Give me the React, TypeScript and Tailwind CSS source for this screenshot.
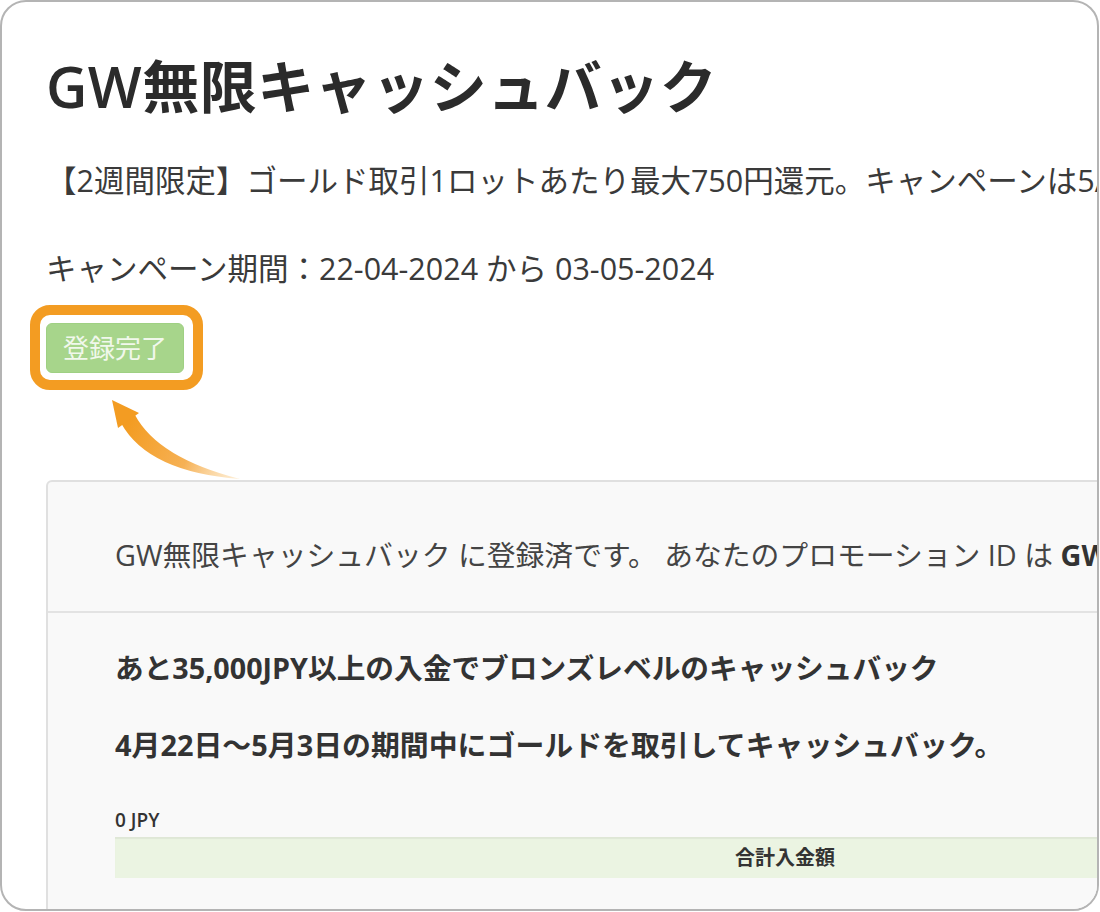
import React from "react";

const FONT = "font-['Open_Sans','Noto_Sans_CJK_JP',sans-serif]";

function Arrow() {
  return (
    <svg
      className="pointer-events-none absolute left-0 top-0"
      width="300"
      height="500"
      viewBox="0 0 300 500"
    >
      <defs>
        <linearGradient id="arrowGrad" gradientUnits="userSpaceOnUse" x1="238" y1="478" x2="128" y2="418">
          <stop offset="0" stopColor="#fde6c0" stopOpacity="0.6" />
          <stop offset="0.45" stopColor="#f6b155" />
          <stop offset="1" stopColor="#f39c22" />
        </linearGradient>
      </defs>
      <path
        d="M133 413 Q 156 456 238 477 Q 146 470 119 421 Z"
        fill="url(#arrowGrad)"
      />
      <path d="M110 398 L137 411 L116 426 Z" fill="#f39c22" />
    </svg>
  );
}

export default function App() {
  return (
    <div className={`w-[1100px] h-[912px] bg-white ${FONT}`}>
      <div className="relative w-[1099px] h-[911px] overflow-hidden rounded-[26px] border-2 border-[#b4b4b4] bg-white">
        <div className="w-[1500px] pl-[44px] pt-[50px]">
          <h1 className="text-[57px] leading-[68px] font-semibold text-[#2b2b2b] tracking-[0.5px]">
            GW無限キャッシュバック
          </h1>
          <p className="mt-[40px] text-[30.5px] leading-[40px] text-[#3a3a3a] whitespace-nowrap">
            【2週間限定】ゴールド取引1ロットあたり最大750円還元。キャンペーンは5/3まで。
          </p>
          <p className="mt-[48px] text-[30.5px] leading-[40px] text-[#3a3a3a] whitespace-nowrap">
            キャンペーン期間：22-04-2024 から 03-05-2024
          </p>
          <div className="mt-[35px] flex">
            <div className="relative">
              <div className="absolute left-[-16px] top-[-18px] right-[-19px] bottom-[-17px] rounded-[20px] border-[10px] border-[#f39c22]" />
              <button className="relative flex h-[50px] w-[138px] items-center justify-center rounded-[6px] border border-[#9fd083] bg-[#a7d58b] text-[26px] text-[#f1f8ec]">
                登録完了
              </button>
            </div>
          </div>
          <div className="mt-[107px] w-[1460px] rounded-tl-[6px] border-2 border-b-0 border-[#e0e0e0] bg-[#f9f9f9]">
            <div className="border-b-2 border-[#e3e3e3] pl-[67px] pt-[55px] pb-[38px]">
              <p className="text-[28.8px] leading-[36px] text-[#444] whitespace-nowrap">
                GW無限キャッシュバック に登録済です。 あなたのプロモーション ID は <span className="font-bold text-[#333]">GW-2024-CASHBACK</span>
              </p>
            </div>
            <div className="pl-[67px] pt-[37px] pb-[40px]">
              <p className="text-[28.7px] leading-[36px] font-bold text-[#333] whitespace-nowrap">
                あと35,000JPY以上の入金でブロンズレベルのキャッシュバック
              </p>
              <p className="mt-[41px] text-[28.9px] leading-[36px] font-bold text-[#333] whitespace-nowrap">
                4月22日〜5月3日の期間中にゴールドを取引してキャッシュバック。
              </p>
              <p className="mt-[45px] text-[19px] leading-[24px] font-semibold text-[#333]">
                0 JPY
              </p>
              <div className="mt-[5px] flex h-[41px] w-[1340px] items-center justify-center bg-[#ebf4e2] shadow-[inset_0_2px_1px_rgba(0,0,0,0.05)]">
                <span className="text-[20px] font-bold text-[#333]">合計入金額</span>
              </div>
            </div>
          </div>
        </div>
        <Arrow />
      </div>
    </div>
  );
}
